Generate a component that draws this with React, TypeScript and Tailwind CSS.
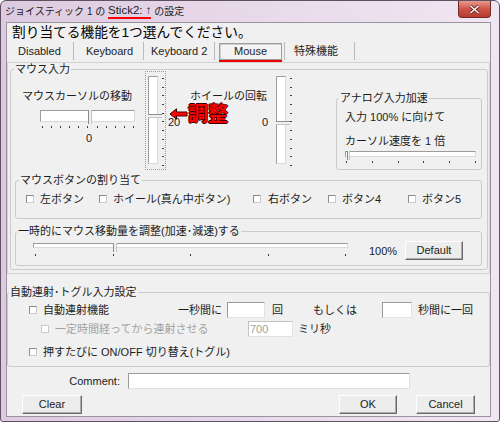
import clsx from 'clsx'
import type { ReactNode } from 'react'

const groove =
  'relative bg-white border border-t-[#9c9c9c] border-l-[#9c9c9c] border-b-[#dadada] border-r-[#dadada]'
const field =
  'h-[16px] bg-white border border-t-[#9a9a9a] border-l-[#9a9a9a] border-b-[#e2e2e2] border-r-[#e2e2e2]'

function Group({
  title,
  className,
  legendClass,
  children,
}: {
  title: string
  className?: string
  legendClass?: string
  children?: ReactNode
}) {
  return (
    <fieldset className={clsx('border border-[#cbcbcb] rounded-[3px]', className)}>
      <legend className={clsx('px-[1px] leading-[12px] whitespace-nowrap', legendClass)}>{title}</legend>
      {children}
    </fieldset>
  )
}

function Check({ disabled }: { disabled?: boolean }) {
  return (
    <span
      className={clsx(
        'block shrink-0 w-[8px] h-[8px] bg-white border',
        disabled ? 'border-[#cacaca]' : 'border-[#8a8a8a] border-b-[#cbcbcb] border-r-[#cbcbcb]'
      )}
    />
  )
}

function Btn({ children, className }: { children: ReactNode; className?: string }) {
  return (
    <button
      className={clsx(
        'flex items-center justify-center bg-[#ededed] border border-t-white border-l-white border-b-[#6a6a6a] border-r-[#6a6a6a] shadow-[inset_-1px_-1px_0_#ababab] text-[11px] leading-none',
        className
      )}
    >
      {children}
    </button>
  )
}

function Ticks({ n, vertical, className }: { n: number; vertical?: boolean; className?: string }) {
  return (
    <div className={clsx('flex justify-between', vertical && 'flex-col', className)}>
      {Array.from({ length: n }).map((_, i) => (
        <span key={i} className={vertical ? 'block w-[2px] h-[1px] bg-[#3a3a3a]' : 'block w-[1px] h-[2px] bg-[#3a3a3a]'} />
      ))}
    </div>
  )
}

function VSlider({ thumbClass, focus }: { thumbClass: string; focus?: boolean }) {
  return (
    <div className={clsx('flex shrink-0 w-[21px] h-[99px] border', focus ? 'border-dotted border-[#9a9a9a]' : 'border-transparent')}>
      <div className={clsx(groove, 'ml-[2px] mt-[4px] w-[10px] h-[88px]')}>
        <div
          className={clsx(
            'absolute -left-[1px] w-[14px] h-[4px] bg-[#f0f0f0] border-t border-b border-t-[#8c8c8c] border-b-[#c4c4c4]',
            thumbClass
          )}
        />
      </div>
      <Ticks n={11} vertical className="ml-[4px] mt-[6px] h-[88px]" />
    </div>
  )
}

function Tab({ children, className }: { children: ReactNode; className?: string }) {
  return (
    <div className={clsx('flex items-center h-[18px] border-r border-[#b9b9b9] whitespace-nowrap', className)}>
      {children}
    </div>
  )
}

export default function App() {
  return (
    <div className="w-[500px] h-[424px] bg-white font-['Liberation_Sans','Noto_Sans_CJK_JP',sans-serif] text-[11px] text-[#1c1c1c]">
      <div className="flex flex-col w-[500px] h-[422px] border border-[#5d5262] rounded-t-[6px] rounded-b-[3px] bg-linear-to-r from-[#ddcae0] via-[#e8d9ea] to-[#f0e6f1]">
        {/* title bar */}
        <div className="flex items-start h-[21px] shrink-0">
          <div className="flex items-center h-[21px] pl-[4px] text-[10px] text-[#1c1c1c] whitespace-nowrap">
            ジョイスティック 1 の&nbsp;
            <span className="text-[11.5px] leading-[13px] border-b-2 border-[#ff0000]">Stick2: ↑</span>
            &nbsp;の設定
          </div>
          <div className="ml-auto mr-[8px] flex items-center justify-center w-[33px] h-[17px] rounded-b-[4px] border border-t-0 border-[#6e2a25] bg-linear-to-b from-[#e59a90] via-[#cf5348] to-[#b83a2e]">
            <svg width="11" height="9" viewBox="0 0 11 9">
              <path d="M1.5 1 L9.5 8 M9.5 1 L1.5 8" stroke="#5a1a16" strokeWidth="3" />
              <path d="M1.5 1 L9.5 8 M9.5 1 L1.5 8" stroke="#ffffff" strokeWidth="1.6" />
            </svg>
          </div>
        </div>

        {/* client area */}
        <div className="ml-[5px] w-[485px] h-[395px] shrink-0 bg-[#f0f0f0] border border-[#9b92a0] flex flex-col">
          <div className="mt-[1px] pl-[5px] h-[17px] leading-[17px] text-[13.7px] text-black whitespace-nowrap">
            割り当てる機能を1つ選んでください。
          </div>

          {/* tabs */}
          <div className="mt-[1px] flex items-start h-[20px]">
            <Tab className="w-[67px] pl-[11px]">Disabled</Tab>
            <Tab className="w-[70px] pl-[12px]">Keyboard</Tab>
            <Tab className="w-[71px] pl-[7px]">Keyboard 2</Tab>
            <div className="ml-[4px] flex flex-col w-[63px]">
              <div className="mt-[1px] h-[17px] flex items-center justify-center bg-[#f4f4f4] border border-[#9d9d9d] shadow-[inset_1px_1px_0_#d0d0d0]">
                Mouse
              </div>
              <div className="h-[2px] bg-[#f00000]" />
            </div>
            <div className="ml-[2px] flex items-center h-[18px] w-[71px] pl-[9px] border-l border-r border-[#b9b9b9]">
              特殊機能
            </div>
          </div>

          {/* tab page */}
          <div className="h-[212px] border border-[#d2d2d2]">
            <Group title="マウス入力" className="ml-[2px] w-[478px] h-[207px]" legendClass="ml-[3px]">
              <div className="flex flex-col">
                {/* sliders row */}
                <div className="-mt-[4px] h-[103px] flex items-start">
                  <div className="ml-[11px] w-[119px] flex flex-col shrink-0">
                    <div className="mt-[18px] h-[14px] leading-[14px] whitespace-nowrap">マウスカーソルの移動</div>
                    <div className={clsx(groove, 'mt-[7px] ml-[18px] w-[95px] h-[12px]')}>
                      <div className="absolute left-[47px] -top-[1px] w-[4px] h-[14px] bg-[#f0f0f0] border-l border-r border-l-[#8c8c8c] border-r-[#c4c4c4]" />
                    </div>
                    <Ticks n={11} className="mt-[4px] ml-[20px] w-[92px]" />
                    <div className="mt-[3px] ml-[18px] w-[95px] pl-[3px] leading-[14px] text-center">0</div>
                  </div>

                  <div className="ml-[4px]">
                    <VSlider focus thumbClass="top-[37px]" />
                  </div>

                  <div className="relative ml-[2px] w-[20px] shrink-0">
                    <div className="mt-[45px] leading-[12px]">20</div>
                    <div className="absolute left-[1px] top-[33px] flex items-center whitespace-nowrap">
                      <svg width="19" height="12" viewBox="0 0 19 12">
                        <path d="M1 6 L7.5 0.8 L7.5 4 L18 4 L18 8 L7.5 8 L7.5 11.2 Z" fill="#ff0000" stroke="#3a0000" strokeWidth="1" />
                      </svg>
                      <span className="text-[20px] leading-[20px] font-bold text-[#ff0000] [text-shadow:1px_0_0_#3a0000,-1px_0_0_#3a0000,0_1px_0_#3a0000,0_-1px_0_#3a0000]">
                        調整
                      </span>
                    </div>
                  </div>

                  <div className="ml-[2px] w-[68px] shrink-0 mt-[18px] leading-[14px] whitespace-nowrap">ホイールの回転</div>
                  <div className="ml-[4px] w-[8px] shrink-0 mt-[44px] leading-[14px]">0</div>
                  <div className="ml-[3px]">
                    <VSlider thumbClass="top-[44px]" />
                  </div>

                  <Group
                    title="アナログ入力加速"
                    className="ml-[42px] mt-[21px] w-[146px] h-[78px] shrink-0"
                    legendClass="ml-[2px]"
                  >
                    <div className="mt-[6px] pl-[8px] leading-[14px] whitespace-nowrap">入力 100% に向けて</div>
                    <div className="mt-[10px] pl-[8px] leading-[14px] whitespace-nowrap">カーソル速度を 1 倍</div>
                    <div className={clsx(groove, 'mt-[3px] ml-[8px] w-[131px] h-[6px]')}>
                      <div className="absolute left-[1px] -top-[1px] w-[3px] h-[9px] bg-[#f0f0f0] border-l border-r border-l-[#8c8c8c] border-r-[#c4c4c4]" />
                    </div>
                    <Ticks n={6} className="mt-[4px] ml-[9px] w-[130px]" />
                  </Group>
                </div>

                {/* mouse buttons */}
                <Group title="マウスボタンの割り当て" className="ml-[4px] w-[467px] h-[45px]" legendClass="ml-[3px]">
                  <div className="mt-[6px] h-[14px] flex items-center whitespace-nowrap">
                    <div className="ml-[10px] w-[73px] flex items-center gap-[6px]">
                      <Check />
                      左ボタン
                    </div>
                    <div className="w-[154px] flex items-center gap-[6px]">
                      <Check />
                      ホイール(真ん中ボタン)
                    </div>
                    <div className="w-[75px] flex items-center gap-[7px]">
                      <Check />
                      右ボタン
                    </div>
                    <div className="w-[80px] flex items-center gap-[6px]">
                      <Check />
                      ボタン4
                    </div>
                    <div className="flex items-center gap-[6px]">
                      <Check />
                      ボタン5
                    </div>
                  </div>
                </Group>

                {/* temporary speed */}
                <Group
                  title="一時的にマウス移動量を調整(加速･減速)する"
                  className="mt-[6px] ml-[4px] w-[467px] h-[41px]"
                  legendClass="ml-[1px]"
                >
                  <div className="flex items-start">
                    <div className="ml-[17px] w-[315px] shrink-0 flex flex-col">
                      <div className={clsx(groove, 'mt-[6px] h-[5px]')}>
                        <div className="absolute left-[79px] -top-[1px] w-[4px] h-[9px] bg-[#f0f0f0] border-l border-r border-l-[#8c8c8c] border-r-[#c4c4c4]" />
                      </div>
                      <Ticks n={5} className="mt-[6px] px-[2px]" />
                    </div>
                    <div className="ml-[21px] w-[36px] mt-[7px] leading-[14px]">100%</div>
                    <Btn className="mt-[4px] w-[58px] h-[19px]">Default</Btn>
                  </div>
                </Group>
              </div>
            </Group>
          </div>

          {/* auto fire */}
          <Group title="自動連射･トグル入力設定" className="mt-[12px] w-full h-[81px]" legendClass="ml-[1px]">
            <div className="mt-[4px] h-[16px] flex items-center whitespace-nowrap">
              <div className="ml-[21px]">
                <Check />
              </div>
              <div className="ml-[6px] w-[135px]">自動連射機能</div>
              <div className="w-[49px]">一秒間に</div>
              <div className={clsx(field, 'w-[38px]')} />
              <div className="ml-[7px] w-[41px]">回</div>
              <div className="w-[69px]">もしくは</div>
              <div className={clsx(field, 'w-[30px]')} />
              <div className="ml-[6px]">秒間に一回</div>
            </div>
            <div className="mt-[3px] h-[16px] flex items-center whitespace-nowrap">
              <div className="ml-[33px]">
                <Check disabled />
              </div>
              <div className="ml-[6px] w-[193px] text-[#a3a3a3]">一定時間経ってから連射させる</div>
              <div className={clsx(field, 'w-[45px] flex items-center pl-[1px] text-[#9f9f9f] border-t-[#c3c3c3] border-l-[#c3c3c3]')}>
                700
              </div>
              <div className="ml-[5px]">ミリ秒</div>
            </div>
            <div className="mt-[7px] h-[16px] flex items-center whitespace-nowrap">
              <div className="ml-[21px]">
                <Check />
              </div>
              <div className="ml-[6px]">押すたびに ON/OFF 切り替え(トグル)</div>
            </div>
          </Group>

          {/* comment */}
          <div className="mt-[6px] h-[16px] flex items-center">
            <div className="w-[113px] text-right">Comment:</div>
            <div className={clsx(field, 'ml-[8px] w-[282px]')} />
          </div>

          {/* buttons */}
          <div className="mt-[6px] flex">
            <Btn className="ml-[15px] w-[60px] h-[19px]">Clear</Btn>
            <Btn className="ml-[257px] w-[58px] h-[19px]">OK</Btn>
            <Btn className="ml-[19px] w-[59px] h-[19px]">Cancel</Btn>
          </div>
        </div>
      </div>
    </div>
  )
}
